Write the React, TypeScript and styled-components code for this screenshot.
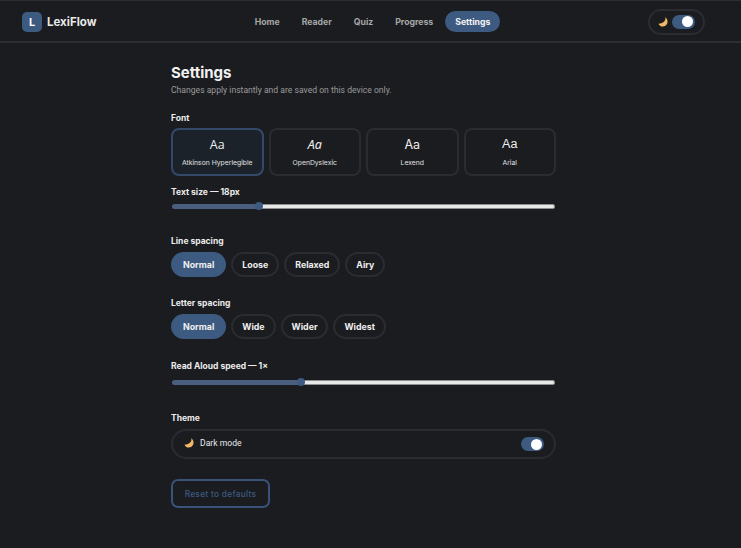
import { createGlobalStyle, styled } from 'styled-components'

const GlobalStyle = createGlobalStyle`
  * { box-sizing: border-box; }
  html, body { margin: 0; padding: 0; background: #1a1c20; }
  body { font-family: Inter, "Liberation Sans", sans-serif; color: #f0f0f0; }
`

const navItems = ['Home', 'Reader', 'Quiz', 'Progress', 'Settings']
const fonts = [
  { name: 'Atkinson Hyperlegible', family: '"Open Sans", sans-serif', selected: true },
  { name: 'OpenDyslexic', family: '"Noto Sans", sans-serif', italic: true },
  { name: 'Lexend', family: 'Inter, sans-serif' },
  { name: 'Arial', family: '"Liberation Sans", sans-serif' },
]

function Moon() {
  return (
    <MoonIcon viewBox="0 0 10 10">
      <path d="M7.300 0.300C8 3.400 6 6.300 0.500 6.700 1.300 8.600 3.200 9.700 5 9.500 7.900 9.200 9.700 6.800 9.500 4.200 9.400 2.700 8.500 1.200 7.300 0.300z" fill="#f2b866" />
    </MoonIcon>
  )
}

function Chips({ items }: { items: string[] }) {
  return (
    <ChipRow>
      {items.map((item, i) => (
        <Chip key={item} $active={i === 0}>{item}</Chip>
      ))}
    </ChipRow>
  )
}

export default function App() {
  return (
    <>
      <GlobalStyle />
      <Header>
        <Brand>
          <LogoMark>L</LogoMark>
          <BrandName>LexiFlow</BrandName>
        </Brand>
        <Nav>
          {navItems.map((item) => (
            <NavLink key={item} $active={item === 'Settings'}>{item}</NavLink>
          ))}
        </Nav>
        <ThemePill>
          <Moon />
          <Switch />
        </ThemePill>
      </Header>
      <Main>
        <Title>Settings</Title>
        <Subtitle>Changes apply instantly and are saved on this device only.</Subtitle>

        <Label $top={15}>Font</Label>
        <FontGrid>
          {fonts.map((f) => (
            <FontCard key={f.name} $selected={f.selected}>
              <FontSample style={{ fontFamily: f.family, fontStyle: f.italic ? 'italic' : 'normal' }}>Aa</FontSample>
              <FontName>{f.name}</FontName>
            </FontCard>
          ))}
        </FontGrid>

        <Label $top={10}>Text size — 18px</Label>
        <Slider $top={6}>
          <SliderFill style={{ width: '22.700%' }} />
          <SliderRest />
        </Slider>

        <Label $top={27}>Line spacing</Label>
        <Chips items={['Normal', 'Loose', 'Relaxed', 'Airy']} />

        <Label $top={20}>Letter spacing</Label>
        <Chips items={['Normal', 'Wide', 'Wider', 'Widest']} />

        <Label $top={21}>Read Aloud speed — 1×</Label>
        <Slider $top={8}>
          <SliderFill style={{ width: '33.700%' }} />
          <SliderRest />
        </Slider>

        <Label $top={28}>Theme</Label>
        <ThemeRow>
          <ThemeText>
            <Moon />
            Dark mode
          </ThemeText>
          <Switch />
        </ThemeRow>

        <ResetButton>Reset to defaults</ResetButton>
      </Main>
    </>
  )
}

const Header = styled.header`
  height: 43px;
  padding: 1px 36px 0 22px;
  border-top: 1px solid #2c2e33;
  border-bottom: 2px solid #2c2e33;
  display: flex;
  justify-content: space-between;
  align-items: center;
`

const Brand = styled.div`
  width: 75px;
  display: flex;
  align-items: center;
  gap: 5px;
`

const LogoMark = styled.div`
  width: 20px;
  height: 20px;
  flex: none;
  border-radius: 5px;
  background: #3d5a80;
  color: #fff;
  font-size: 11px;
  font-weight: 700;
  display: flex;
  align-items: center;
  justify-content: center;
`

const BrandName = styled.span`
  font-size: 11.500px;
  font-weight: 700;
  color: #e8e8e8;
`

const Nav = styled.nav`
  display: flex;
  gap: 2px;
`

const NavLink = styled.a<{ $active?: boolean }>`
  height: 21px;
  padding: 0 10px;
  border-radius: 11px;
  display: flex;
  align-items: center;
  font-size: 8.700px;
  font-weight: 700;
  background: ${(p) => (p.$active ? '#3d5a80' : 'transparent')};
  color: ${(p) => (p.$active ? '#f5f5f5' : '#a6a6a6')};
`

const ThemePill = styled.div`
  width: 57px;
  height: 26px;
  border: 2px solid #2a2c31;
  border-radius: 13px;
  display: flex;
  align-items: center;
  justify-content: center;
  gap: 4px;
`

const MoonIcon = styled.svg`
  width: 10px;
  height: 10px;
  flex: none;
`

const Switch = styled.span`
  width: 23px;
  height: 14px;
  border-radius: 7px;
  background: #3d5a80;
  display: flex;
  align-items: center;
  justify-content: flex-end;
  padding-right: 2px;

  &::after {
    content: '';
    width: 11px;
    height: 11px;
    border-radius: 50%;
    background: #fff;
  }
`

const Main = styled.main`
  width: 385px;
  margin-left: 171px;
  padding: 20px 0 40px;
`

const Title = styled.h1`
  margin: 0;
  font-size: 15px;
  line-height: 19px;
  font-weight: 700;
  color: #f2f2f2;
`

const Subtitle = styled.p`
  margin: 1px 0 0;
  font-family: Roboto, sans-serif;
  font-size: 8.600px;
  line-height: 14px;
  color: #9a9a9a;
`

const Label = styled.div<{ $top: number }>`
  margin-top: ${(p) => p.$top}px;
  font-size: 8.500px;
  line-height: 12px;
  font-weight: 700;
  color: #ececec;
`

const FontGrid = styled.div`
  margin-top: 4px;
  display: grid;
  grid-template-columns: repeat(4, 1fr);
  gap: 5px;
`

const FontCard = styled.div<{ $selected?: boolean }>`
  height: 48px;
  border-radius: 8px;
  border: 2px solid ${(p) => (p.$selected ? '#34496a' : '#2a2c31')};
  background: ${(p) => (p.$selected ? '#1c2229' : 'transparent')};
  display: flex;
  flex-direction: column;
  align-items: center;
  justify-content: center;
  gap: 6px;
`

const FontSample = styled.span`
  font-size: 12.500px;
  line-height: 15px;
  color: #eee;
`

const FontName = styled.span`
  font-size: 6.800px;
  line-height: 9px;
  color: #e2e2e2;
`

const Slider = styled.div<{ $top: number }>`
  margin-top: ${(p) => p.$top}px;
  margin-left: 1px;
  width: 383px;
  height: 4px;
  display: flex;
  align-items: center;
`

const SliderFill = styled.div`
  position: relative;
  height: 5px;
  background: #4a5f80;
  border-radius: 2.500px 0 0 2.500px;

  &::after {
    content: '';
    position: absolute;
    right: -4px;
    top: -1.500px;
    width: 8px;
    height: 8px;
    border-radius: 50%;
    background: #3d5a80;
  }
`

const SliderRest = styled.div`
  flex: 1;
  height: 5px;
  background: #e8e8e8;
  border: 1px solid #8f8f8f;
  border-left: 0;
  border-radius: 0 2.500px 2.500px 0;
`

const ChipRow = styled.div`
  margin-top: 5px;
  display: flex;
  gap: 5px;
`

const Chip = styled.button<{ $active?: boolean }>`
  height: 25px;
  padding: 0 ${(p) => (p.$active ? 10 : 9)}px;
  border-radius: 13px;
  border: 2px solid ${(p) => (p.$active ? '#3d5a80' : '#2a2c31')};
  background: ${(p) => (p.$active ? '#3d5a80' : 'transparent')};
  color: #efefef;
  font-family: inherit;
  font-size: 8.800px;
  font-weight: 700;
`

const ThemeRow = styled.div`
  margin-top: 5px;
  height: 30px;
  padding: 0 10px 0 11px;
  border: 2px solid #2a2c31;
  border-radius: 15px;
  display: flex;
  align-items: center;
  justify-content: space-between;
`

const ThemeText = styled.span`
  display: flex;
  align-items: center;
  gap: 6px;
  padding-bottom: 2px;
  font-family: Roboto, sans-serif;
  font-size: 8.600px;
  color: #e8e8e8;
`

const ResetButton = styled.button`
  display: block;
  margin-top: 20px;
  width: 99px;
  height: 29px;
  border: 2px solid #38527a;
  border-radius: 7px;
  background: transparent;
  color: #3d5a80;
  font-family: inherit;
  font-size: 8.300px;
  font-weight: 500;
  letter-spacing: 0.300px;
`
